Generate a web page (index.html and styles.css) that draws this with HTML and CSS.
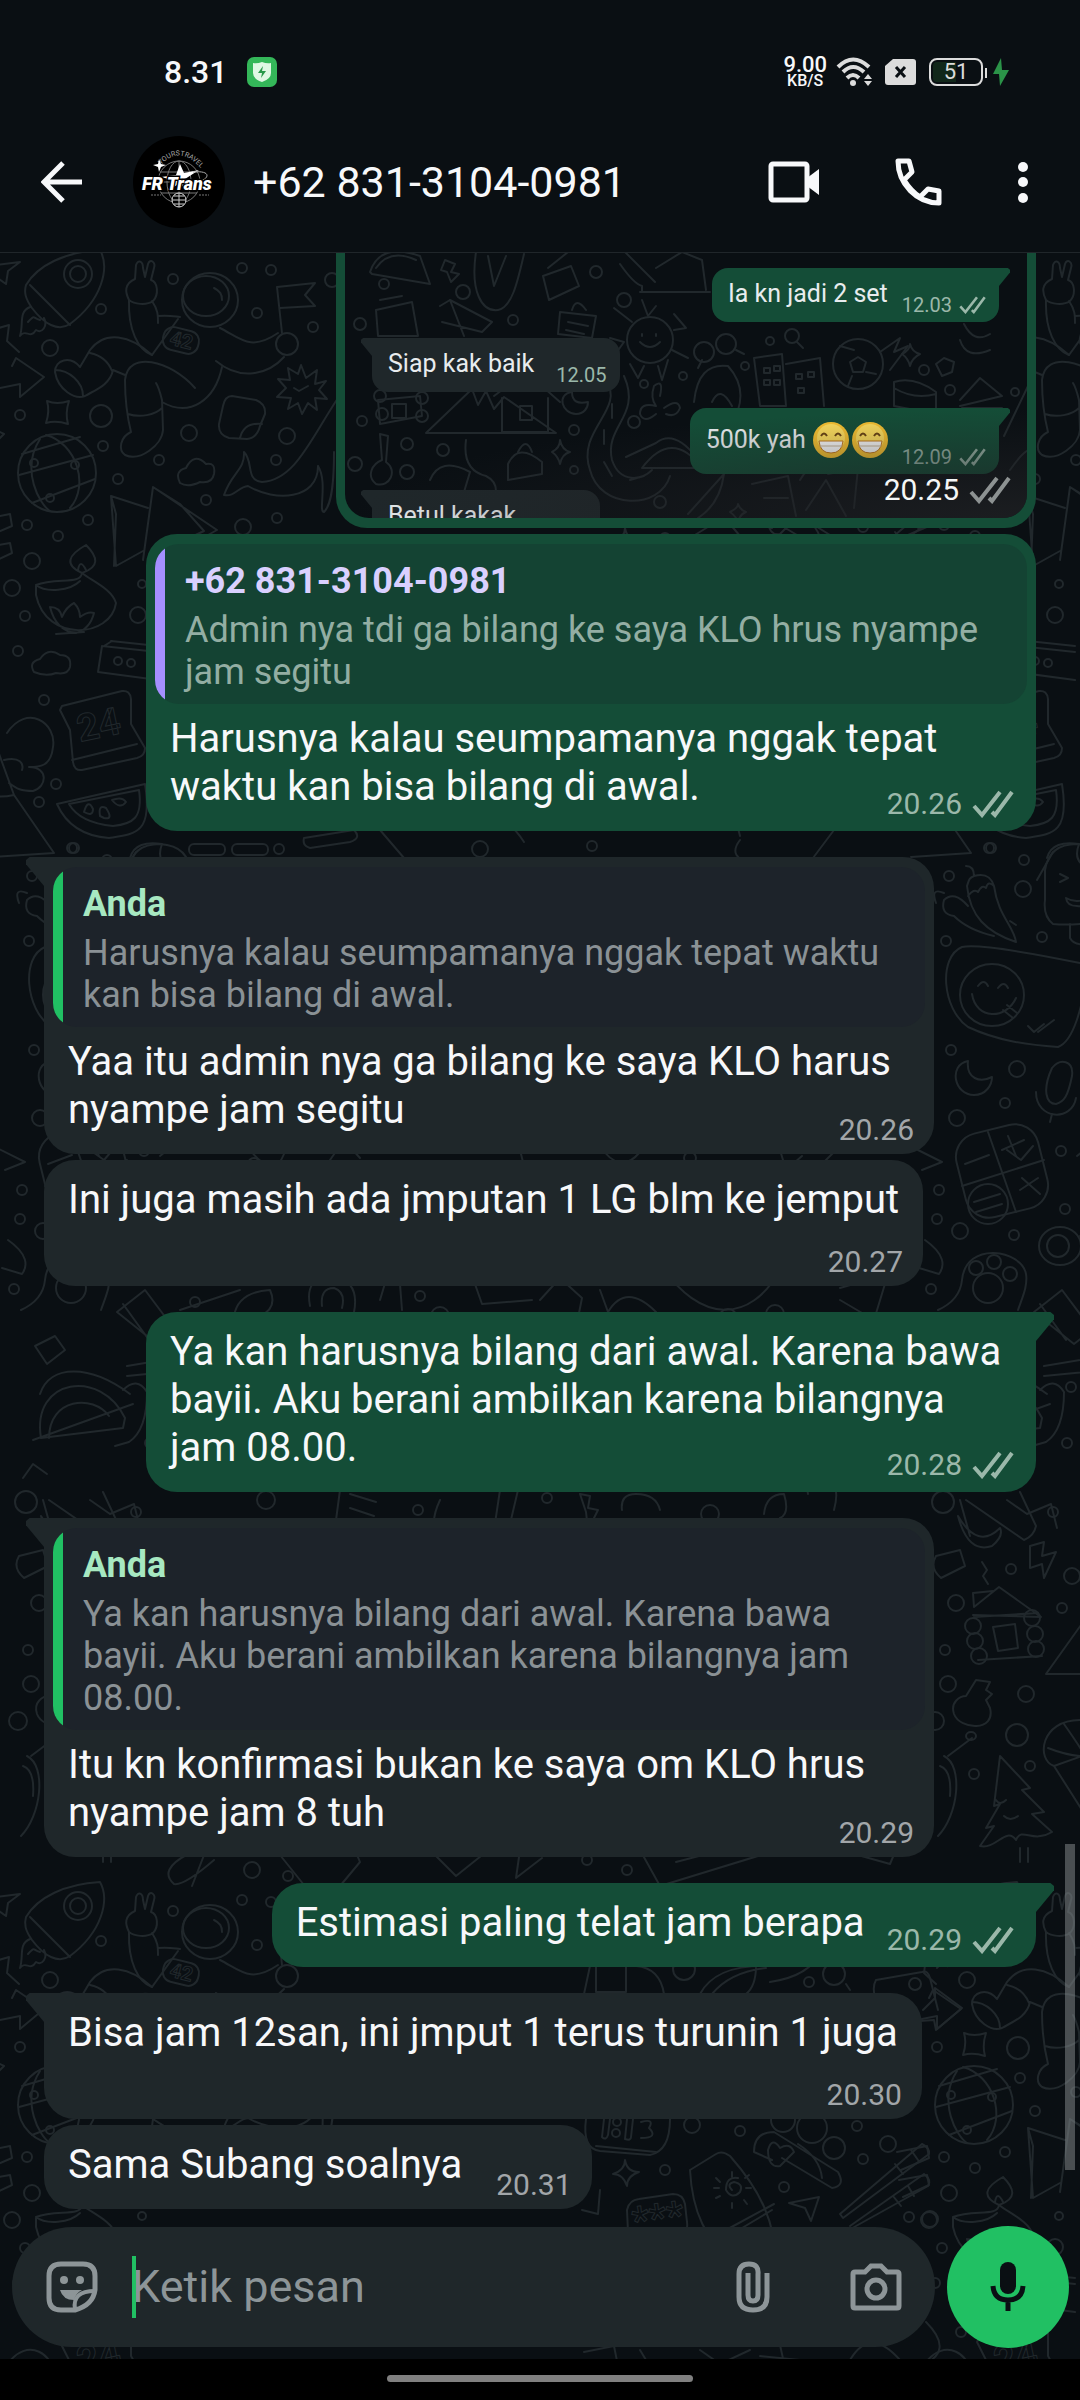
FILE: index.html
```html
<!DOCTYPE html>
<html lang="id">
<head>
<meta charset="utf-8">
<meta name="viewport" content="width=device-width, initial-scale=1">
<title>+62 831-3104-0981</title>
<link rel="stylesheet" href="styles.css">
</head>
<body>
<svg class="defs" aria-hidden="true">
  <defs>
    <symbol id="ticks" viewBox="0 0 42 28"><path d="M2 16l8 9L28 2M20 22l3 3L40 2" fill="none" stroke="currentColor" stroke-width="4"/></symbol>
    <symbol id="grin" viewBox="0 0 36 36">
      <circle cx="18" cy="18" r="18" fill="#f9c331"/><circle cx="18" cy="16" r="14" fill="#ffdf5e"/>
      <path d="M8 14q3-5 6 0M22 14q3-5 6 0" fill="none" stroke="#6b4513" stroke-width="2"/>
      <path d="M6 19h24q-1 12-12 12T6 19z" fill="#fff" stroke="#c67a1b" stroke-width="1"/>
      <path d="M7 24h22" stroke="#c9b79a" stroke-width="1"/>
    </symbol>
    <g id="doodles">
      <!-- rocket -->
      <circle cx="78" cy="274" r="14"/><circle cx="78" cy="274" r="8"/>
      <path d="M26 285C38 265 65 252 100 250C110 268 102 300 70 324C58 332 44 324 32 308C25 298 24 292 26 285zM30 285L70 325M30 307C18 312 24 324 20 336C26 328 30 340 36 330C42 334 48 326 44 318M28 322c8-8 4-4 12-2"/>
      <!-- astronaut -->
      <path d="M135 279l1-14c2-6 7-4 7 3l2 9 3-13c2-6 8-2 6 4l-3 12c7 2 8 15 2 21-7 5-19 3-24-1-4-8-5-16 6-21zM129 300c-1 30 9 50 23 55l26-36M152 301c6 9 6 14 6 22M158 316c10-1 14 0 22 1"/>
      <ellipse cx="210" cy="300" rx="28" ry="27"/><ellipse cx="206" cy="296" rx="23" ry="20"/><path d="M214 288c6 3 8 6 8 12"/>
      <rect x="163" y="329" width="36" height="23" rx="10" transform="rotate(14 181 340)"/>
      <text x="170" y="347" transform="rotate(14 181 340)" class="scribble">42</text>
      <path d="M220 328c20 10 30 24 58 5M216 361c24 20 52 14 68-4M282 333l-5-46 38-4-10 12 10 11-35 2"/><circle cx="287" cy="344" r="11"/>
      <path d="M152 355c-22-20-47-25-62-5l-10 17c-10-12-25-7-25 5 3 18 20 28 30 24 10-6 25-11 28-26l12 5M55 370c14 0 28 12 28 26M90 353c10 2 18 8 22 18M195 388c-25-28-67-38-70-8 0 20 3 40 6 52-11 5-13 18-6 23 15 7 37-10 38-25l-1-30c-2-8-4-14-6-17M128 414c12 4 27 1 34-6M162 402c28 16 53-2 60-35"/>
      <path d="M301 365l5 13 11-8-2 14 11-3-7 9 8 9-12-1 2 12-9-7-6 11-4-11-10 6 3-11-14-1 9-9-8-9 12 1-2-12 10 6zM294 388l5 3 9-5"/>
      <path d="M232 396l24 4q10 4 9 14l-5 12q-3 12-13 13l-18-1q-11-3-10-14l4-18q2-10 9-10zM240 438q4-16 22-14"/>
      <path d="M338 398C310 440 295 480 262 482C245 480 254 462 244 452C245 470 232 472 224 495C235 497 238 487 248 486C275 502 318 500 318 466M318 466c10 16 0 46 6 46 6-6 10-20 10-60"/>
      <path d="M47 401q10 4 22 0-4 12-1 23-12-4-22-1 4-12 1-22z"/>
      <!-- globe -->
      <circle cx="57" cy="473" r="39"/><path d="M40 439C20 470 40 505 50 511M46 435c30 8 44 50 24 73M22 454l58-17M19 475l74-20M32 503l63-24"/><circle cx="34" cy="463" r="4"/><circle cx="75" cy="465" r="4"/><circle cx="50" cy="498" r="4"/>
      <path d="M180 483q-6-12 6-15 8-16 20-4 10-2 8 10-2 10-14 8-12 6-20 1zM111 496l37 12M111 496l5 70 27-15M111 496l5 18-2 52M143 560l10-73 64 43-36 20M153 487l27 17 24 27-30 14"/>
      <!-- lamp -->
      <path d="M36 585c20-8 45 0 46-12 10 8 30 16 34 30-5 35-70 40-80-8zM36 585c10 8 34 6 44-4M82 573c-18-8-14-18 4-28 12 12 14 22-4 28zM78 570q2-12 8 0M50 607q10 0 12 10 4-10 12-14 6 6 6 14 8-6 14-4-4 16-18 20-20-2-26-26M56 634l28-2"/>
      <path d="M34 672q-6-10 6-13 8-12 20-4 12 0 10 12-2 8-14 6-10 4-22-1zM111 641l47 5M102 646l56 6M102 646l-4 26 60 8M104 646l8-5"/><circle cx="118" cy="661" r="4"/><circle cx="131" cy="663" r="4"/>
      <path d="M62 706l60-15q8-1 9 8v25l14 24q0 8-8 10l-55 12q-8 1-9-8l-3-32-10-20zM72 760l65-16"/><text x="80" y="742" class="scribble big" transform="rotate(-12 80 742)">24</text>
      <path d="M57 804l88-20c8 50-10 50-36 54-28-2-44-16-52-34zM69 804l70-14c4 28-6 34-26 36-20-2-36-8-44-22zM84 812q4-14 9-3 0 8-9 3zM100 816q-2-12 6-8 8 12-2 10zM112 800q10-4 14 2-6 8-14-2z"/>
      <path d="M7 733c20-30 50-10 46 14-2 20-14 20-24 20 20 0 18 20 4 24-12 0-16-2-24-8M-6 740l20 55 40 58-60 4M4 760c16-4 20 4 18 10M14 795q-18 4-30-2M-8 330l17-5-2 16 12 11M12 366l4-8 28 19-24 20v-13l-20 4"/>
      <path d="M-4 265l24-3-12 9-2 13-10-7M-4 430l8 4-6 6M-20 520l30-6 2 12-28 12M-18 548l28-5 2 10-26 12"/>
      <rect x="189" y="844" width="36" height="11" rx="5"/><rect x="232" y="844" width="36" height="11" rx="5"/><circle cx="279" cy="849" r="5"/><path d="M130 858c4-14 16-16 32-14q-6 16 6 22M304 838l50-8q8 8-4 12l-40 6q-8-2-6-10"/>
      <g><circle cx="242" cy="268" r="5"/><circle cx="271" cy="270" r="5"/><circle cx="173" cy="279" r="5"/><circle cx="257" cy="313" r="5"/><circle cx="313" cy="327" r="5"/><circle cx="101" cy="309" r="5"/><circle cx="50" cy="348" r="8"/><circle cx="20" cy="415" r="5"/><circle cx="101" cy="416" r="11"/><circle cx="189" cy="433" r="8"/><circle cx="103" cy="446" r="5"/><circle cx="159" cy="460" r="5"/><circle cx="118" cy="479" r="5"/><circle cx="276" cy="460" r="5"/><circle cx="287" cy="436" r="8"/><circle cx="206" cy="500" r="5"/><circle cx="88" cy="520" r="5"/><circle cx="27" cy="525" r="5"/><circle cx="58" cy="536" r="5"/><circle cx="32" cy="561" r="8"/><circle cx="12" cy="588" r="8"/><circle cx="25" cy="616" r="5"/><circle cx="18" cy="651" r="5"/><circle cx="138" cy="615" r="8"/><circle cx="142" cy="584" r="4"/><circle cx="44" cy="700" r="5"/><circle cx="56" cy="784" r="5"/><circle cx="39" cy="802" r="5"/><circle cx="72" cy="848" r="5"/><circle cx="243" cy="527" r="8"/><circle cx="277" cy="518" r="5"/><circle cx="332" cy="280" r="7"/></g>
      <!-- popsicle, chillies, sticker -->
      <path d="M1045 900v-30q4-26 32-26 30 2 30 30v46q-30 6-54 4-10-8-8-24zM1060 874l8 4-8 4M1066 898q10 6 22 0-2 10-11 8-10 0-11-8zM1070 924v14q4 8 18 6v-20"/>
      <path d="M966 866q8 0 8 10c14-4 18 4 20 10 4 30 20 40 22 56-30-10-46-26-49-56 2-6 2-8 7-10M994 886q-6-6-8 2-4-4-8 4-4-4-10 4M968 906q-14-16-24-6-4 14 10 16 14 14 40 20M944 893q-14-6-8 10M1010 921l6 4"/>
      <path d="M962 947q20-4 118 16M962 947c-24 10-20 62 6 80 30 14 60 18 90 20 16-6 24-40 30-76"/><ellipse cx="992" cy="995" rx="32" ry="31"/><path d="M972 994c4 26 34 26 44 4M978 986q6-8 10 0M998 988q6-8 10 0M1003 1010l10 8M1007 1005l10 8M1028 1026l6 6 10-8M1038 1032l16-12"/>
      <path d="M968 1061c-20 4-14 34 6 34 12 0 18-10 18-18-12 6-26 2-24-16zM1052 1068c8-10 22-8 20 8-4 20-8 26-16 28-10 0-14-14-4-36zM1036 1092c0 28 36 30 40 6M1052 1114l-2 8"/>
      <rect x="960" y="1128" width="84" height="86" rx="24" transform="rotate(-14 1002 1171)"/><path d="M988 1132l28 80M962 1186l82-26M965 1164l24-9M1008 1136l8 20M1002 1150l22-10M1020 1190l18-12M1022 1178l18 16"/><circle cx="988" cy="1204" r="20"/><path d="M974 1202l26-8M976 1212l26-8"/>
      <circle cx="988" cy="1288" r="15"/><circle cx="976" cy="1268" r="7"/><circle cx="994" cy="1262" r="7"/><circle cx="1010" cy="1274" r="7"/><path d="M938 1310q22-10 24-30c4-40 60-30 64-6 2 12-4 24-8 36"/><ellipse cx="1060" cy="1246" rx="21" ry="19"/><circle cx="1058" cy="1246" r="11"/><path d="M1080 1236l24 14M1034 1312l28-22 30 40-18 14zM1040 1304l26 36M1044 1366l60-10M1044 1376l60-6"/>
      <path d="M914 1148l28 14-20 8M925 1240c20 14 20 26 14 34l-20-6M960 1500l10 36M966 1500l58 40q10-4 12-14l-16-34M958 1516q20 34 42 12 4 8-8 18-24 8-34-30zM1030 1546l14-4-2 14 14-4-12 26-2-14-12 4zM936 1556l24-6 5 16-24 12q-12-10-5-22zM982 1562l5 8-4 6 5 8"/>
      <path d="M974 1607l25-20 42 30-68-2M974 1607l-1-14 20-2M974 1617l64-4M978 1660l64-4M993 1627l22-3 3 24-20 3z"/><circle cx="973" cy="1626" r="8"/><circle cx="975" cy="1641" r="8"/><circle cx="979" cy="1656" r="8"/><circle cx="1032" cy="1618" r="8"/><circle cx="1035" cy="1634" r="8"/><circle cx="1036" cy="1649" r="8"/>
      <path d="M1046 1674l50-70 50 70zM976 1680l14 2-4 8 6 4-6 6 4 8c6 24-30 22-36 6-4-12 6-18 12-18zM948 1756l24-18"/><ellipse cx="971" cy="1736" rx="5" ry="4"/>
      <path d="M1000 1756l30 32-8 2 22 22-12 2 20 18c-20 12-30-6-36 8-10-14-20 10-36 6l14-20-8 2 14-24-6 2zM996 1800q4 6 10 0M1004 1816q6 6 14 0M1020 1848v14M1028 1848v14M944 1756c20 10 14 60-6 80M940 1766q12 4 10 30"/>
      <path d="M1080 1720c-40 0-44 40-26 46M1054 1766l28-10M1064 1724q14 20 20 30M1048 1748q20 8 36 8M1054 1766l28 44"/>
      <g><circle cx="991" cy="848" r="5"/><circle cx="949" cy="876" r="5"/><circle cx="1024" cy="860" r="5"/><circle cx="1023" cy="889" r="8"/><circle cx="946" cy="941" r="5"/><circle cx="1042" cy="937" r="5"/><circle cx="951" cy="1050" r="5"/><circle cx="1017" cy="1069" r="8"/><circle cx="1005" cy="1103" r="5"/><circle cx="957" cy="1118" r="8"/><circle cx="1061" cy="1151" r="5"/><circle cx="939" cy="1190" r="5"/><circle cx="937" cy="1219" r="5"/><circle cx="960" cy="1231" r="8"/><circle cx="1014" cy="1235" r="5"/><circle cx="1065" cy="1209" r="5"/><circle cx="931" cy="1289" r="5"/><circle cx="943" cy="1502" r="11"/><circle cx="1053" cy="1512" r="5"/><circle cx="1011" cy="1569" r="5"/><circle cx="956" cy="1603" r="8"/><circle cx="1062" cy="1608" r="5"/><circle cx="945" cy="1650" r="5"/><circle cx="948" cy="1684" r="8"/><circle cx="1026" cy="1694" r="8"/><circle cx="1017" cy="1735" r="11"/><circle cx="974" cy="1774" r="5"/><circle cx="1030" cy="1766" r="5"/><circle cx="1072" cy="1576" r="8"/><circle cx="935" cy="1721" r="9"/><circle cx="1067" cy="1443" r="5"/><circle cx="1071" cy="1387" r="5"/></g>
      <path d="M1040 1390q14-14 24 2 0 38-18 50l-14 4M957 1394c10-30 50-30 90 0M950 1440l100-36M958 1438c-10-60 60-70 84-20l-2 10zM966 1438c0-40 44-44 60-22M952 1346l20-10 10 14-18 14zM940 1478l10-14 14 10"/>
      <!-- strips between the groups -->
      <path d="M310 1306q-6-30 24-30 26 6 20 36M322 1306q-2-18 12-18 12 4 8 20M234 1316q4-24 36-26 8 18-10 26M380 1300l6-20 14 4 2 26M470 1270l12 34 50-4M540 1300l20-22 22 20-4 20M600 1290l8 22q18-30 48 0M660 1264c40 60 90 60 120 6M840 1300l34 20 14-46-48 14M340 1490l-4 30M350 1494l26 8M350 1508l24 8M448 1490q26-30 70 0l-8 34M500 1490l-6 40M580 1494l10 2-2 12 10 2-10 20-2-18zM622 1510q-2-16 14-16 20 0 24 16M764 1514q2-20 20-20 6 20-4 24M808 1494q-4-16 14-14 20 0 12 30M90 1500l20 14 24-10 6 24"/>
      <path d="M206 1850l-14 36M214 1860q-30 26-40 24-16-14 14-30M280 1855l24 30M340 1856q12-16 20 6l-20 24M430 1850l26 26 30-24M520 1850l-4 28 26-20M640 1850l20 36 150-46-4-12-130 34M840 1850l50 14 10-24M120 880l16-28M380 830l24 28M470 828q30-24 54 14M700 826l30-30 10 40M740 840q-14 18 14 24M810 862l30-40M90 1150l14 10 12-14M160 1156l20-16M250 1150q24 30 34 4M330 1160l14-20 16 18M520 1150l6 24M600 1146q20 30 40 6M780 1150l6 20 16-14M820 1166l20-20M180 1310l60-20M440 1500q-14 30 4 40"/>
      <g><circle cx="254" cy="1164" r="6"/><circle cx="690" cy="1158" r="6"/><circle cx="440" cy="1316" r="9"/><circle cx="728" cy="1318" r="9"/><circle cx="775" cy="1314" r="9"/><circle cx="420" cy="1296" r="5"/><circle cx="418" cy="1510" r="5"/><circle cx="547" cy="1498" r="5"/><circle cx="266" cy="1500" r="9"/><circle cx="710" cy="1514" r="9"/><circle cx="252" cy="1870" r="8"/><circle cx="288" cy="1876" r="5"/><circle cx="587" cy="1860" r="5"/><circle cx="627" cy="1870" r="5"/><circle cx="480" cy="849" r="8"/><circle cx="592" cy="846" r="5"/><circle cx="195" cy="1302" r="5"/></g>
    </g>
    <g id="doodles-low">
      <path d="M590 1966l-6 28M596 1966v26h30v-26M636 1966q24 2 28 28M700 1994q16-30 70-28M712 1994q18-22 54-26M756 1966q0 20-10 28M770 1982q40-6 50-30M846 1984l4 6M876 1980l46-8q6-2 8 6l8 32M876 1980q-6 10 4 30M923 2010l12-12v-10l27 20-26 22-2-10-14 1"/><circle cx="834" cy="1974" r="11"/>
      <path d="M586 2119q-4 30 14 32l50 4q20-4 20-36M596 2146l60 6M604 2119l-2 18q4 4 6-2l2-16M627 2119l-2 20q6 2 6-2l2-18"/><circle cx="617" cy="2122" r="4"/><circle cx="616" cy="2133" r="4"/><path d="M641 2122q14-4 8 6 10 10-8 10"/>
      <path d="M625 2160q2 12 14 12-12 4-12 14-4-12-14-12 12-4 12-14z"/>
      <path d="M690 2170l26-16q6-4 14 2c30 34 46 66 46 110M690 2170c2 40 14 70 50 100M742 2228l30-18M726 2230l48-26"/><path d="M732 2190q-6-6 2-8 10 2 6 10-8 8-14-2 0-14 12-12M732 2172v5M716 2178l4 4M714 2188h5M716 2198l4-2M732 2203v5M744 2200l3 4M746 2188h5M745 2178l4-3"/>
      <path d="M754 2152q0-20 20-20l64 40q8 14-6 16l-50-30M754 2152l18 8M768 2150q4-14 12-2 10-6 14 4l-14 14q-12 2-12-16zM822 2178q-2-20-24-34"/><circle cx="783" cy="2120" r="12"/><circle cx="812" cy="2128" r="15"/><circle cx="834" cy="2148" r="11"/>
      <path d="M840 2214l82-70q8 4 7 10l-86 64zM895 2164l8 10M911 2150l7 10M850 2226l74-52q8 6 4 12l-90 50M893 2196l8 10M908 2186l6 10M789 2203l30-6-8 24-6-13z"/>
      <path d="M628 2232l-1-22q2-10 12-11l34-5q10 0 12 10l2 18q2 12-12 14l-40 6"/><text x="634" y="2234" class="scribble big" transform="rotate(-8 634 2234)">***</text>
      <path d="M578 2200q4-16-8-16M600 2190l-2 24-16-4M584 2352l30-6 4 20M640 2350l12 20M700 2350l20 14 30-14M780 2345l4 18M760 2356l40 4M850 2360q20-34 50 0M926 2322q30 30-6 44"/>
      <g><circle cx="684" cy="1969" r="11"/><circle cx="809" cy="1982" r="5"/><circle cx="915" cy="1984" r="6"/><circle cx="692" cy="2125" r="8"/><circle cx="740" cy="2131" r="5"/><circle cx="857" cy="2126" r="5"/><circle cx="888" cy="2144" r="8"/><circle cx="863" cy="2159" r="5"/><circle cx="665" cy="2170" r="5"/><circle cx="784" cy="2187" r="5"/><circle cx="909" cy="2217" r="5"/><circle cx="930" cy="2219" r="8"/></g>
    </g>
  </defs>
</svg>

<div class="screen">
  <div class="status-bar">
    <div class="status-left">
      <span class="clock">8.31</span>
      <svg class="shield" viewBox="0 0 30 30" aria-hidden="true"><rect width="30" height="30" rx="7" fill="#34b759"/><path d="M15 5q5 2 9 1v10q0 6-9 9-9-3-9-9V6q4 1 9-1z" fill="#dff8e4"/><path d="M16 9l-5 7h4l-1 5 5-7h-4z" fill="#28994a"/></svg>
    </div>
    <div class="status-right">
      <span class="net"><b>9.00</b><small>KB/S</small></span>
      <svg width="38" height="30" viewBox="0 0 38 30" aria-hidden="true"><g fill="none" stroke="#dcdcdc" stroke-width="4"><path d="M2 10q15-15 31 0M7 15q10-10 21 0M11 21q6-6 12 0"/></g><circle cx="17" cy="26" r="3" fill="#dcdcdc"/><path d="M28 22l4-5 4 5zM28 24l4 5 4-5z" fill="#dcdcdc"/></svg>
      <svg class="sim" width="31" height="26" viewBox="0 0 31 26" aria-hidden="true"><path d="M8 0h20q3 0 3 3v20q0 3-3 3H3q-3 0-3-3V7z" fill="#dcdcdc"/><path d="M11 8l9 10M20 8l-9 10" stroke="#0a0f13" stroke-width="3"/></svg>
      <span class="battery"><span class="level">51</span></span>
      <svg width="18" height="28" viewBox="0 0 18 28" aria-hidden="true"><path d="M9 0L1 16h6l1 12 9-16h-7z" fill="#2b9348"/></svg>
    </div>
  </div>

  <header class="chat-header">
    <button class="icon-button back" type="button" aria-label="Kembali"><svg width="42" height="42" viewBox="0 0 42 42"><path d="M22 2L3 21l19 19M3 21h38" fill="none" stroke="#f7f8fa" stroke-width="5"/></svg></button>
    <svg class="avatar" viewBox="0 0 92 92" role="img" aria-label="FR Trans">
      <circle cx="46" cy="46" r="46" fill="#000"/>
      <g fill="none" stroke="#777" stroke-width="1"><circle cx="46" cy="46" r="21"/><ellipse cx="46" cy="46" rx="12" ry="21"/><path d="M46 25v42M27 36h38M25 46h42M28 57h36"/></g>
      <circle cx="46" cy="64" r="7" fill="#000" stroke="#ddd"/><path d="M39 64h14M46 57v14M41 60h10M41 68h10" stroke="#ccc"/>
      <path id="arc" d="M28 29Q48 7 71 36" fill="none"/><text class="avatar-arc"><textPath href="#arc">YOURSTRAVEL</textPath></text>
      <path d="M26 23l2 5 5 1-5 2-2 5-1-5-5-2 5-1zM47 28l4 9 15-3-14 9 5 12-11-7-11 6 5-10-12-3 15-2z" fill="#fff"/><path d="M60 36c20-2 16 8 4 10" fill="none" stroke="#aaa"/>
      <text class="avatar-name" x="9" y="54">FR Trans</text>
      <path d="M18 59h10M66 59h10" stroke="#777" stroke-dasharray="2 1"/>
    </svg>
    <h1>+62 831-3104-0981</h1>
    <div class="actions">
      <button class="icon-button" type="button" aria-label="Panggilan video"><svg width="52" height="42" viewBox="0 0 52 42"><rect x="3" y="3" width="36" height="36" rx="2" fill="none" stroke="#f7f8fa" stroke-width="5"/><path d="M39 17L51 8v26L39 25z" fill="#f7f8fa"/></svg></button>
      <button class="icon-button" type="button" aria-label="Panggilan suara"><svg width="47" height="48" viewBox="0 0 47 48"><path d="M3 3h11l3 11-8 8C14 30 19 35 25 39l8-8 11 2v12C22 45 3 26 3 3z" fill="none" stroke="#f7f8fa" stroke-width="5" stroke-linejoin="round"/></svg></button>
      <button class="icon-button" type="button" aria-label="Opsi lainnya"><svg width="12" height="42" viewBox="0 0 12 42"><g fill="#f7f8fa"><circle cx="6" cy="6" r="5"/><circle cx="6" cy="21" r="5"/><circle cx="6" cy="37" r="5"/></g></svg></button>
    </div>
  </header>

  <main class="chat">
    <svg class="wallpaper" aria-hidden="true">
      <g transform="translate(0 -253)">
        <use href="#doodles" x="-917"/><use href="#doodles"/><use href="#doodles" x="917"/>
        <use href="#doodles" x="-917" y="1632"/><use href="#doodles" y="1632"/><use href="#doodles" x="917" y="1632"/>
        <use href="#doodles-low"/><use href="#doodles-low" y="-1632"/>
      </g>
    </svg>

    <div class="messages">
      <div class="bubble out photo">
        <div class="shot">
          <svg class="wallpaper" aria-hidden="true">
            <g transform="translate(-345 -253)">
              <path d="M370 272q10-30 50-16l10 28-58-10zM376 268q14-20 40-8M445 260l10 4-4 8 8 2-8 8-4-10-6-2zM476 252c-6 40 6 60 22 58 14-2 20-30 26-56M488 256l6 30 12-30M543 276l28-10 8 20-30 14zM548 268l20-16M625 252l30 30M640 292h70M620 264q14 20 22 22 0 6 0 6M656 268l26-16 20 8 4 30M376 310l36-8 6 34h-40zM380 300l22-4M440 306l10-6 42 22-10 10-40-10M450 300l14 36M560 312l36 4-4 22-34-4zM568 322l20 4M566 330l18 4M572 310q4-14 14 0"/>
              <circle cx="650" cy="340" r="23"/><path d="M640 342q10 10 20 0M642 334v2M656 334v2M642 300l6 16 8-10M614 308l18 14M610 338l14 4-10 14M630 364l8 14 6-12M658 366l4 14 6-20M672 350l16 8M674 330l12-2-12-14"/>
              <circle cx="704" cy="352" r="10"/><circle cx="726" cy="344" r="10"/><path d="M698 368l4-8M736 350l8 4"/><circle cx="792" cy="336" r="7"/><path d="M797 342l6 6"/>
              <path d="M754 358l28-4 4 52h-26zM786 364l34-6 4 48M764 368h6v5h-6zM774 366h6v5h-6zM764 380h6v5h-6zM774 380h6v5h-6zM796 374h6v5h-6zM808 372h6v5h-6zM798 388h6v5h-6z"/><circle cx="858" cy="364" r="25"/><path d="M850 362l8-5 8 5-3 10h-10zM840 346l14 4M880 352l20-14-6 14 14-6-18 24M848 386l4-10M876 374l-10-2"/><path d="M910 344q2 8 10 10-8 4-10 12-2-8-8-12 8-4 8-10z"/>
              <path d="M894 382q20-6 42 10v22l-42-8zM894 388q20 12 42 6M960 400l20-22 22 18-42 10M962 408h40M694 402q4-40 34-36 18 20 10 44M712 402q8-18 20 4M936 364l8-6 10 4-2 10-10 4zM964 324q10 20 26 10M960 340q6 20 30 10"/>
              <path d="M426 433l46-44 6 16 8-14 8 18 10-12 52 36zM494 396l32-24 34 30M502 398v34h46v-34M520 406h12v14h-12zM378 400l42-4 2 20-42 8zM392 404h14v14h-14z"/><circle cx="380" cy="396" r="6"/><circle cx="382" cy="414" r="6"/><circle cx="422" cy="398" r="6"/><circle cx="422" cy="416" r="6"/>
              <path d="M606 380c20 30-30 50-16 90 10 40 70 40 80 6M624 376c18 40-20 50-12 84 8 24 30 20 40 10M612 404v14M604 430v14M604 462l8 14M630 480l14-4M572 392c-16 2-10 22 4 22 8 0 12-6 12-12-10 2-16 0-16-10zM660 396q4-18-6-10-4 12 2 20-16-4-16 8 4 10 16 0M664 408q14-10 16 0-4 10-14 6M626 457l30-14q18-14 40 14M642 468q30-40 60 0z"/>
              <path d="M380 434l8 2-2 26c12 8 4 26-10 22-10-8-4-20 6-24zM466 440q-4 30 20 36 20 10 0 40M430 480q10-24 40-8l-6 20M508 464q10-22 34-2v12l-34 6zM518 452q8-16 14 0M560 440q2 10 10 12-8 2-10 12-2-8-8-12 8-4 8-12zM688 514l36-40q-4 30-26 44M752 484l36-8 8 40M764 498h24M800 480q14-24 28-6l30-6-4 40M806 510l20-30 20 36M738 504q2 6 8 8-6 2-8 10-2-6-8-10 8-4 8-8zM1004 436l24-50M1010 470q14-20 20-20"/>
              <g><circle cx="384" cy="284" r="5"/><circle cx="463" cy="292" r="7"/><circle cx="596" cy="272" r="6"/><circle cx="624" cy="300" r="7"/><circle cx="513" cy="320" r="5"/><circle cx="360" cy="324" r="6"/><circle cx="745" cy="366" r="4"/><circle cx="770" cy="341" r="4"/><circle cx="924" cy="370" r="5"/><circle cx="644" cy="384" r="4"/><circle cx="683" cy="376" r="4"/><circle cx="634" cy="422" r="6"/><circle cx="362" cy="421" r="5"/><circle cx="574" cy="430" r="5"/><circle cx="407" cy="444" r="6"/><circle cx="443" cy="450" r="6"/><circle cx="355" cy="464" r="7"/><circle cx="407" cy="472" r="7"/><circle cx="574" cy="470" r="4"/><circle cx="660" cy="502" r="6"/><circle cx="950" cy="390" r="5"/><circle cx="1015" cy="392" r="4"/></g>
            </g>
          </svg>
          <div class="mini out tail"><p>Ia kn jadi 2 set</p><span class="meta">12.03 <svg class="ticks"><use href="#ticks"/></svg></span></div>
          <div class="mini in tail"><p>Siap kak baik</p><span class="meta">12.05</span></div>
          <div class="mini out tail tall"><p>500k yah <svg class="emoji" role="img" aria-label="😁"><use href="#grin"/></svg><svg class="emoji" role="img" aria-label="😁"><use href="#grin"/></svg></p><span class="meta">12.09 <svg class="ticks"><use href="#ticks"/></svg></span></div>
          <div class="mini in tail last"><p>Betul kakak</p></div>
          <div class="shade"></div>
          <span class="meta overlay">20.25 <svg class="ticks"><use href="#ticks"/></svg></span>
        </div>
      </div>

      <div class="bubble out">
        <blockquote class="quote other"><strong>+62 831-3104-0981</strong><p>Admin nya tdi ga bilang ke saya KLO hrus nyampe jam segitu</p></blockquote>
        <div class="body"><p>Harusnya kalau seumpamanya nggak tepat waktu kan bisa bilang di awal.</p><span class="meta">20.26 <svg class="ticks"><use href="#ticks"/></svg></span></div>
      </div>

      <div class="bubble in tail">
        <blockquote class="quote"><strong>Anda</strong><p>Harusnya kalau seumpamanya nggak tepat waktu kan bisa bilang di awal.</p></blockquote>
        <div class="body"><p>Yaa itu admin nya ga bilang ke saya KLO harus nyampe jam segitu</p><span class="meta">20.26</span></div>
      </div>

      <div class="bubble in">
        <div class="body drop"><p>Ini juga masih ada jmputan 1 LG blm ke jemput</p><span class="meta">20.27</span></div>
      </div>

      <div class="bubble out tail">
        <div class="body"><p>Ya kan harusnya bilang dari awal. Karena bawa bayii. Aku berani ambilkan karena bilangnya jam 08.00.</p><span class="meta">20.28 <svg class="ticks"><use href="#ticks"/></svg></span></div>
      </div>

      <div class="bubble in tail">
        <blockquote class="quote"><strong>Anda</strong><p>Ya kan harusnya bilang dari awal. Karena bawa bayii. Aku berani ambilkan karena bilangnya jam 08.00.</p></blockquote>
        <div class="body"><p>Itu kn konfirmasi bukan ke saya om KLO hrus nyampe jam 8 tuh</p><span class="meta">20.29</span></div>
      </div>

      <div class="bubble out tail">
        <div class="body inline"><p>Estimasi paling telat jam berapa</p><span class="meta">20.29 <svg class="ticks"><use href="#ticks"/></svg></span></div>
      </div>

      <div class="bubble in tail">
        <div class="body drop"><p>Bisa jam 12san, ini jmput 1 terus turunin 1 juga</p><span class="meta">20.30</span></div>
      </div>

      <div class="bubble in">
        <div class="body inline"><p>Sama Subang soalnya</p><span class="meta">20.31</span></div>
      </div>
    </div>

    <form class="composer">
      <div class="field">
        <button class="icon-button" type="button" aria-label="Emoji dan stiker"><svg width="52" height="52" viewBox="0 0 52 52"><path d="M15 3h22q12 0 12 12v14Q47 44 29 49H15Q3 49 3 37V15Q3 3 15 3z" fill="none" stroke="#8d9598" stroke-width="5" stroke-linejoin="round"/><path d="M29 48q-3-18 20-18" fill="none" stroke="#8d9598" stroke-width="4"/><path d="M14 29h22q-6 3-8 10-11 0-14-10z" fill="#8d9598"/><circle cx="18" cy="19" r="4" fill="#8d9598"/><circle cx="34" cy="19" r="4" fill="#8d9598"/></svg></button>
        <label class="entry"><span class="caret"></span><input type="text" placeholder="Ketik pesan" aria-label="Ketik pesan"></label>
        <button class="icon-button clip" type="button" aria-label="Lampirkan"><svg width="34" height="52" viewBox="0 0 34 52"><path d="M31 12v24q0 13-14 13T3 36V13Q3 3 13 3t9 10v21q0 6-5 6t-5-6V12" fill="none" stroke="#8d9598" stroke-width="5"/></svg></button>
        <button class="icon-button" type="button" aria-label="Kamera"><svg width="52" height="48" viewBox="0 0 52 48"><path d="M5 9h10l6-6h10l6 6h10q2 0 2 2v32q0 2-2 2H5q-2 0-2-2V11q0-2 2-2z" fill="none" stroke="#8d9598" stroke-width="5"/><circle cx="26" cy="26" r="9" fill="none" stroke="#8d9598" stroke-width="5"/></svg></button>
      </div>
      <button class="mic" type="button" aria-label="Pesan suara"><svg width="36" height="50" viewBox="0 0 36 50"><rect x="10" y="0" width="16" height="32" rx="8" fill="#0a0f13"/><path d="M3 24q1 14 15 14t15-14M18 38v11" fill="none" stroke="#0a0f13" stroke-width="5"/></svg></button>
    </form>
    <div class="scroll-thumb"></div>
  </main>

  <div class="nav-bar"><span class="nav-handle"></span></div>
</div>
</body>
</html>
```
FILE: styles.css
```css
* { box-sizing: border-box; }

body {
  margin: 0;
  background: #0a0f13;
  color: #f7f8fa;
  font-family: Roboto, "Liberation Sans", sans-serif;
}

h1, p, blockquote { margin: 0; }
button { border: 0; padding: 0; background: none; color: inherit; font: inherit; }
svg { display: block; flex: none; }

.defs { position: absolute; width: 0; height: 0; }

.screen { display: flex; flex-direction: column; min-height: 100vh; }

/* status bar */
.status-bar {
  display: flex;
  justify-content: space-between;
  align-items: center;
  height: 144px;
  padding: 0 70px 0 164px;
}
.status-left, .status-right { display: flex; align-items: center; }
.status-left { gap: 20px; }
.status-right { gap: 9px; }
.clock { font-size: 32px; font-weight: 500; line-height: 36px; }
.shield { width: 30px; height: 30px; }
.net { display: flex; flex-direction: column; align-items: center; }
.net b { font-size: 22px; font-weight: 500; line-height: 18px; }
.net small { font-size: 16px; font-weight: 500; line-height: 14px; }
.sim { margin-right: 4px; margin-left: 2px; }
.battery {
  position: relative;
  width: 54px;
  height: 28px;
  padding: 2px;
  border: 2px solid #dcdcdc;
  border-radius: 8px;
}
.battery::after {
  content: "";
  position: absolute;
  right: -6px;
  top: 8px;
  width: 2px;
  height: 10px;
  background: #dcdcdc;
}
.level {
  display: block;
  height: 20px;
  border-radius: 4px;
  background: linear-gradient(90deg, #11271a 51%, transparent 51%);
  color: #dcdcdc;
  font-size: 22px;
  line-height: 20px;
  text-align: center;
}

/* conversation header */
.chat-header {
  display: flex;
  align-items: center;
  height: 109px;
  padding: 0 51px 32px 41px;
  border-bottom: 1px solid #20262a;
}
.back { margin-right: 50px; }
.avatar { width: 92px; height: 92px; }
.avatar-name { fill: #fff; stroke: #000; stroke-width: 3px; paint-order: stroke; font-size: 18px; font-style: italic; font-weight: 900; }
.avatar-arc { fill: #aaa; font-size: 7px; }
.chat-header h1 { flex: 1; margin-left: 28px; font-size: 43px; font-weight: 400; line-height: 52px; white-space: nowrap; }
.actions { display: flex; align-items: center; gap: 75px; }

/* conversation */
.chat { position: relative; flex: 1; display: flex; flex-direction: column; overflow: hidden; }
.wallpaper {
  position: absolute;
  inset: 0;
  width: 100%;
  height: 100%;
  fill: none;
  stroke: #21282c;
  stroke-width: 2px;
  stroke-linejoin: round;
  stroke-linecap: round;
}
.scribble { font-size: 20px; font-weight: 700; stroke-width: 1px; }
.scribble.big { font-size: 38px; }

.messages { position: relative; flex: 1; display: flex; flex-direction: column; padding: 0 44px 0; }

.bubble { position: relative; max-width: 890px; margin-top: 6px; border-radius: 31px; }
.bubble.tail { margin-top: 26px; }
.out { align-self: flex-end; background: #144d37; }
.in { align-self: flex-start; background: #1f272a; }
.out.tail { border-top-right-radius: 0; }
.in.tail { border-top-left-radius: 0; }
.tail::before { content: ""; position: absolute; top: 0; width: 18px; height: 29px; background: inherit; }
.out.tail::before { left: 100%; clip-path: polygon(0 0, 80% 0, 100% 10%, 100% 25%, 0 100%); }
.in.tail::before { right: 100%; clip-path: polygon(100% 0, 20% 0, 0 10%, 0 25%, 100% 100%); }

.body { display: grid; padding: 16px 24px 20px; font-size: 40px; line-height: 48px; }
.body > * { grid-area: 1 / 1; }
.quote + .body { padding-top: 11px; }
.meta {
  display: flex;
  align-items: center;
  gap: 10px;
  align-self: end;
  justify-self: end;
  font-size: 30px;
  line-height: 30px;
  color: #a2a6a9;
  white-space: nowrap;
}
.body .meta { margin: 0 -4px -11px 0; }
.out .meta { color: #9bb8aa; }
.out .body .meta { margin: 0 -2px -8px 0; }
.ticks { width: 42px; height: 28px; }
.body.drop p { padding-bottom: 42px; }
.body.inline { display: flex; gap: 34px; }
.out .body.inline { gap: 22px; }

.quote {
  position: relative;
  margin: 0 9px;
  padding: 16px 24px 11px 30px;
  overflow: hidden;
  border-radius: 24px;
  background: #1d232a;
  color: #8a9195;
  font-size: 36px;
  line-height: 42px;
}
.quote::before { content: ""; position: absolute; inset: 0 auto 0 0; width: 10px; background: #21c063; }
.bubble:has(.quote) { padding-top: 10px; }
.quote strong { display: block; margin-bottom: 7px; font-weight: 700; color: #a7e8c1; }
.out .quote { background: #144333; color: #93aea3; }
.quote.other::before { background: #a58fff; }
.quote.other strong { color: #d9d0ff; }

/* photo message holding a screenshot of another chat */
.photo { width: 700px; max-width: 100%; margin-top: 0; padding: 0 9px 10px; border-top-left-radius: 0; border-top-right-radius: 0; }
.shot {
  position: relative;
  display: flex;
  flex-direction: column;
  gap: 16px;
  height: 265px;
  padding: 15px 28px 0 27px;
  overflow: hidden;
  border-radius: 0 0 24px 24px;
  background: #0a0f13;
}
.mini { position: relative; display: flex; flex: none; gap: 14px; height: 54px; padding: 10px 13px 0 16px; border-radius: 16px; font-size: 25px; line-height: 32px; color: #e8ecee; }
.mini p { display: flex; align-items: center; gap: 3px; height: 32px; white-space: nowrap; }
.mini.tail::before { width: 11px; height: 18px; }
.mini.tall { height: 66px; }
.mini.tall p { height: 44px; }
.mini.last { width: 228px; }
.mini.in { gap: 22px; }
.mini .meta { gap: 7px; margin-bottom: 6px; font-size: 20px; line-height: 22px; }
.mini .ticks { width: 27px; height: 18px; }
.emoji { width: 36px; height: 36px; }
.emoji:first-child { margin-left: 4px; }
.shade { position: absolute; inset: auto 0 0 0; height: 110px; background: radial-gradient(ellipse at 100% 100%, #202124cc, transparent 70%); }
.out .meta.overlay { position: absolute; right: 16px; bottom: 13px; color: #f4f6f6; }
.overlay .ticks { color: #8d9292; }

/* composer */
.composer { position: relative; display: flex; align-items: center; gap: 12px; padding: 17px 11px 11px 12px; }
.field { flex: 1; display: flex; align-items: center; height: 120px; padding: 0 33px 0 34px; border-radius: 60px; background: #1f272a; }
.entry { position: relative; flex: 1; display: flex; margin-left: 34px; }
.entry input { width: 100%; border: 0; padding: 0; outline: 0; background: none; color: #f7f8fa; font: 45px/62px Roboto, "Liberation Sans", sans-serif; }
.entry input::placeholder { color: #8d9598; opacity: 1; }
.caret { position: absolute; left: 0; top: 0; width: 4px; height: 62px; background: #21c063; }
.clip { margin-right: 80px; }
.mic { flex: none; display: grid; place-items: center; width: 122px; height: 122px; border-radius: 50%; background: #21c063; }

.scroll-thumb { position: absolute; right: 5px; bottom: 189px; width: 10px; height: 326px; background: #8a8f9280; }

.nav-bar { display: flex; justify-content: center; align-items: center; height: 41px; background: #000; }
.nav-handle { width: 306px; height: 7px; margin-bottom: 2px; border-radius: 4px; background: #808080; }
```
